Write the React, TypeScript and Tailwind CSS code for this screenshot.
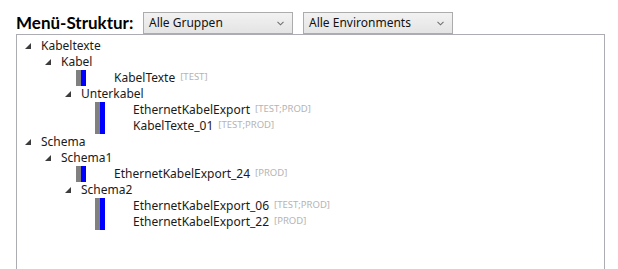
import React from 'react';

type Row =
  | { kind: 'branch'; level: number; label: string }
  | { kind: 'leaf'; level: number; label: string; tag: string };

const ROWS: Row[] = [
  { kind: 'branch', level: 0, label: 'Kabeltexte' },
  { kind: 'branch', level: 1, label: 'Kabel' },
  { kind: 'leaf', level: 2, label: 'KabelTexte', tag: '[TEST]' },
  { kind: 'branch', level: 2, label: 'Unterkabel' },
  { kind: 'leaf', level: 3, label: 'EthernetKabelExport', tag: '[TEST;PROD]' },
  { kind: 'leaf', level: 3, label: 'KabelTexte_01', tag: '[TEST;PROD]' },
  { kind: 'branch', level: 0, label: 'Schema' },
  { kind: 'branch', level: 1, label: 'Schema1' },
  { kind: 'leaf', level: 2, label: 'EthernetKabelExport_24', tag: '[PROD]' },
  { kind: 'branch', level: 2, label: 'Schema2' },
  { kind: 'leaf', level: 3, label: 'EthernetKabelExport_06', tag: '[TEST;PROD]' },
  { kind: 'leaf', level: 3, label: 'EthernetKabelExport_22', tag: '[PROD]' },
];

const BRANCH_INDENT = ['pl-[8px]', 'pl-[28px]', 'pl-[48px]'];
const LEAF_INDENT: Record<number, string> = { 2: 'pl-[59px]', 3: 'pl-[78px]' };

function Expander() {
  return (
    <span className="flex w-[16px] shrink-0 items-center">
      <svg width="6" height="6" viewBox="0 0 6 6">
        <polygon points="6,0 6,6 0,6" fill="#3c3c3c" />
      </svg>
    </span>
  );
}

function Select({ label }: { label: string }) {
  return (
    <div className="flex h-[22px] w-[150px] items-center justify-between border border-[#acacac] bg-gradient-to-b from-[#f2f2f2] to-[#e4e4e4] pl-[5px] pr-[8px] text-[12px] text-[#111]">
      <span>{label}</span>
      <svg width="7" height="5" viewBox="0 0 7 5">
        <polyline points="0.5,0.8 3.5,3.8 6.5,0.8" fill="none" stroke="#707070" strokeWidth="1.1" />
      </svg>
    </div>
  );
}

export default function App() {
  return (
    <div className="h-[269px] w-[618px] overflow-hidden bg-white font-['Noto_Sans',sans-serif] text-[#1a1a1a]">
      <div className="flex items-end pl-[16px] pt-[12px]">
        <h1 className="w-[127px] pb-[1px] font-['Lato',sans-serif] text-[17px] font-bold leading-[20px] text-black">
          Menü-Struktur:
        </h1>
        <Select label="Alle Gruppen" />
        <div className="w-[10px]" />
        <Select label="Alle Environments" />
      </div>
      <div className="ml-[16px] h-[240px] w-[589px] border border-[#abadb3] pt-[3px]">
        {ROWS.map((row, i) =>
          row.kind === 'branch' ? (
            <div key={i} className={`flex h-[16px] items-center text-[12px] leading-[16px] ${BRANCH_INDENT[row.level]}`}>
              <Expander />
              <span>{row.label}</span>
            </div>
          ) : (
            <div key={i} className={`flex h-[16px] items-center text-[12px] leading-[16px] ${LEAF_INDENT[row.level]}`}>
              <span className="h-[16px] w-[5px] bg-[#808080]" />
              <span className="h-[16px] w-[5px] bg-[#0000ff]" />
              <span className="ml-[28px]">{row.label}</span>
              <span className="mb-[3px] ml-[5px] text-[9.5px] text-[#b4b4b4]">{row.tag}</span>
            </div>
          ),
        )}
      </div>
    </div>
  );
}
